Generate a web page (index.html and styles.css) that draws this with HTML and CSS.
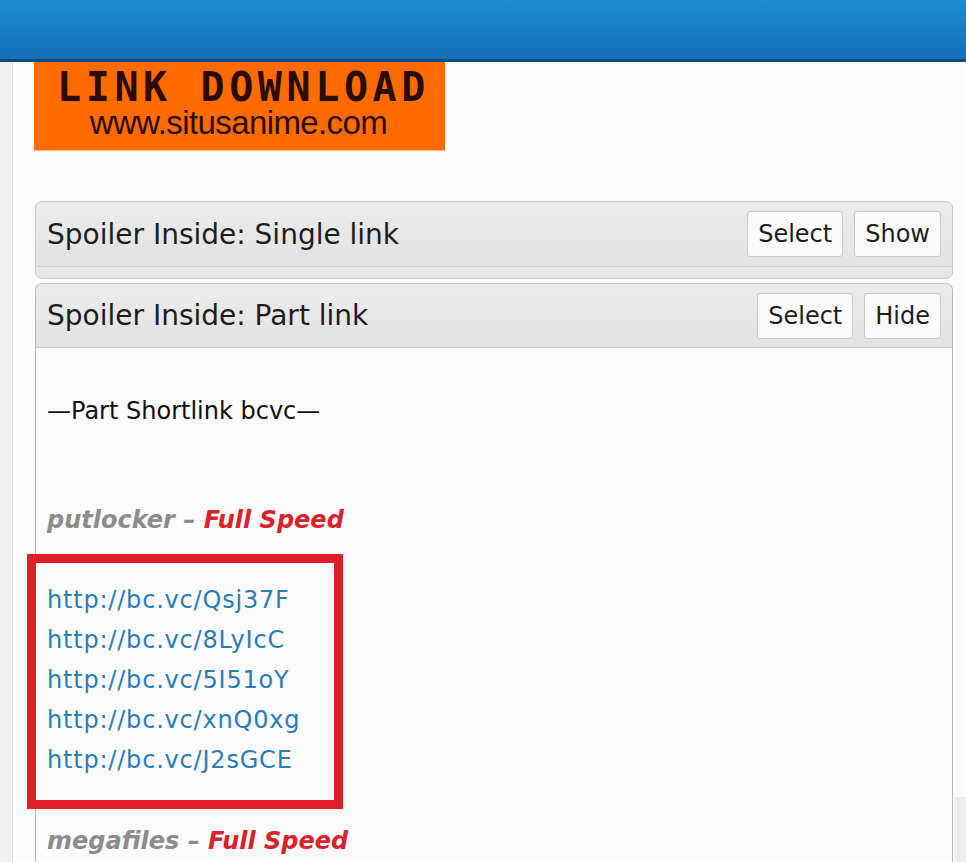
FILE: index.html
```html
<!DOCTYPE html>
<html>
<head>
<meta charset="utf-8">
<link rel="stylesheet" href="styles.css">
</head>
<body>
<div class="topbar"></div>
<div class="page">
  <div class="side"></div>
  <div class="main">
    <div class="banner">
      <div class="banner-title">LINK DOWNLOAD</div>
      <div class="banner-url">www.situsanime.com</div>
    </div>

    <div class="spoiler collapsed">
      <div class="head">
        <span class="title">Spoiler Inside: Single link</span>
        <span class="btns"><span class="btn">Select</span><span class="btn">Show</span></span>
      </div>
      <div class="foot"></div>
    </div>

    <div class="spoiler open">
      <div class="head">
        <span class="title">Spoiler Inside: Part link</span>
        <span class="btns"><span class="btn">Select</span><span class="btn">Hide</span></span>
      </div>
      <div class="body">
        <p class="intro">—Part Shortlink bcvc—</p>
        <p class="host"><span class="hname">putlocker –</span> <span class="speed">Full Speed</span></p>
        <div class="box">
          <a class="link">http://bc.vc/Qsj37F</a>
          <a class="link">http://bc.vc/8LyIcC</a>
          <a class="link">http://bc.vc/5I51oY</a>
          <a class="link">http://bc.vc/xnQ0xg</a>
          <a class="link">http://bc.vc/J2sGCE</a>
        </div>
        <p class="host host2"><span class="hname">megafiles –</span> <span class="speed">Full Speed</span></p>
      </div>
    </div>
  </div>
  <div class="rside"><div class="rblock"></div></div>
</div>
</body>
</html>
```
FILE: styles.css
```css
html, body {
  margin: 0;
  padding: 0;
  background: #fafafa;
  height: 862px;
  overflow: hidden;
  font-family: "DejaVu Sans", Verdana, sans-serif;
}
.topbar {
  height: 59px;
  background: linear-gradient(#1b8bd1, #1571b4);
  border-bottom: 3px solid #0e4a7e;
}
.page {
  display: flex;
  height: 800px;
}
.side {
  width: 12px;
  background: #f0f0f0;
  border-right: 1px solid #dcdcdc;
  flex: none;
}
.main {
  width: 920px;
  padding-left: 21px;
  background: #fafafa;
  flex: none;
}
.rside {
  flex: 1;
  padding-top: 735px;
}
.rblock {
  height: 80px;
  background: #ececec;
  margin-left: 1px;
}
.banner {
  width: 411px;
  height: 88px;
  background: #ff6b00;
  box-shadow: 0 1px 1px #f0c090;
  display: flex;
  flex-direction: column;
  align-items: center;
}
.banner-title {
  font-family: "DejaVu Sans Mono", monospace;
  font-weight: bold;
  font-size: 40px;
  letter-spacing: 4.6px;
  color: #2a0c00;
  line-height: 38px;
  margin-top: 6px;
  padding-left: 8px;
}
.banner-url {
  font-family: "Liberation Sans", Arial, sans-serif;
  font-size: 33px;
  letter-spacing: -0.6px;
  color: #2a0c00;
  line-height: 30px;
  margin-top: 2px;
  padding-right: 2px;
}
.spoiler {
  margin-left: 1px;
  width: 916px;
  border: 1px solid #c9c9c9;
  border-radius: 7px;
  background: #e4e4e4;
}
.collapsed {
  margin-top: 51px;
}
.open {
  margin-top: 4px;
  border-bottom: none;
  border-radius: 7px 7px 0 0;
  border-left-color: #b8b8b8;
  border-right-color: #b8b8b8;
}
.head {
  height: 64px;
  display: flex;
  align-items: center;
  justify-content: space-between;
  padding: 0 11px;
  background: linear-gradient(#ececec, #e2e2e2);
  border-bottom: 1px solid #d0d0d0;
  border-radius: 7px 7px 0 0;
}
.open .head {
  height: 63px;
}
.title {
  font-size: 28px;
  color: #1e1e1e;
}
.btns {
  display: flex;
  gap: 11px;
}
.btn {
  display: block;
  height: 44px;
  line-height: 44px;
  padding: 0 10px;
  font-size: 24px;
  color: #1e1e1e;
  background: #f9f9f9;
  border: 1px solid #c8c8c8;
  border-radius: 3px;
}
.foot {
  height: 11px;
  border-radius: 0 0 7px 7px;
  background: #e6e6e6;
}
.body {
  background: #fafafa;
  padding: 0 11px;
  height: 520px;
}
.body p {
  margin: 0;
  font-size: 24px;
  line-height: 36px;
}
.intro {
  padding-top: 45px;
  color: #111;
}
.body .host {
  margin-top: 73px;
  font-weight: bold;
  font-style: italic;
}
.body .host2 {
  margin-top: 14px;
}
.hname {
  color: #8c8c8c;
}
.speed {
  color: #d8232b;
}
.box {
  margin-top: 16px;
  margin-left: -20px;
  width: 287px;
  border: 9px solid #e01f2b;
  padding: 17px 0 20px 11px;
}
.link {
  display: block;
  font-size: 24px;
  line-height: 40px;
  letter-spacing: 0.8px;
  color: #2b7db5;
  text-decoration: none;
}
```
